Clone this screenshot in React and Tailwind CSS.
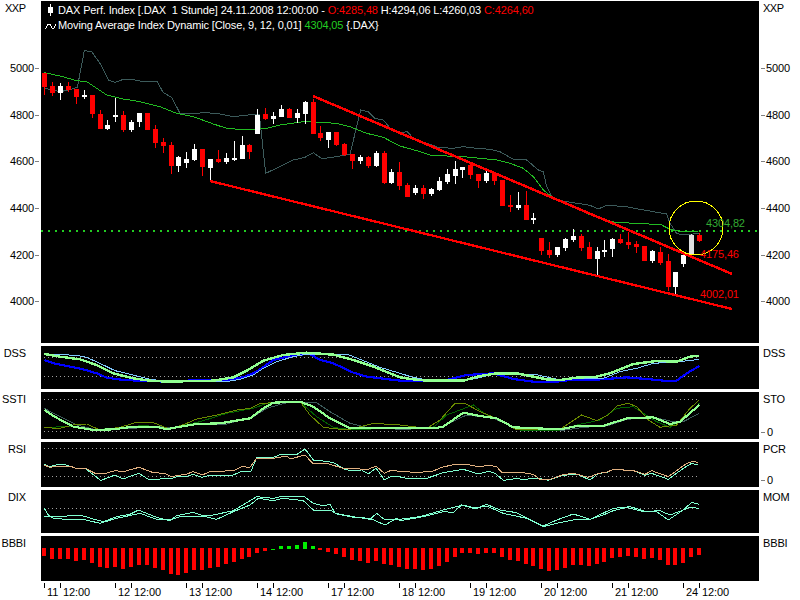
import React from "react";

const z = (x0, y0, pts) => pts.map(([x, y]) => `${x0 + x / 3},${y0 + y / 3}`).join(" ");
const join = (...parts) => parts.join(" ");

// candles: colour, body top, body bottom, wick top, wick bottom (measured at 3x, y from page top)
const candles = [
  ["r",218,262,218,285],["r",258,278,245,288],["w",258,278,250,300],["r",258,270,245,275],["r",267,291,267,312],
  ["w",285,291,270,297],["r",285,341,285,354],["r",341,387,330,387],["w",375,387,360,390],["w",345,348,293,366],
  ["r",345,389,333,395],["w",366,390,360,395],["w",339,366,339,381],["r",339,389,339,389],["r",387,429,375,444],
  ["r",426,438,414,459],["r",435,497,426,522],["w",471,497,468,516],["w",477,488,456,504],["w",447,480,432,483],
  ["r",447,501,447,528],["w",477,504,477,546],["r",477,486,450,489],["w",474,486,459,492],["w",474,480,423,483],
  ["w",435,477,408,477],["r",435,456,433,477],["w",345,403,327,403],["r",342,357,324,360],["w",348,357,336,372],
  ["w",327,351,315,351],["r",327,353,324,353],["w",339,354,327,369],["w",306,342,303,372],["r",306,402,297,402],
  ["r",399,414,378,423],["w",396,420,396,444],["r",396,435,396,438],["r",432,465,429,468],["r",462,483,462,507],
  ["w",471,483,465,492],["r",471,498,468,504],["w",459,498,453,501],["r",459,549,453,552],["w",516,549,507,552],
  ["r",516,558,486,570],["r",555,590,550,592],["w",564,579,555,585],["r",564,582,555,597],["w",567,582,564,588],
  ["w",543,570,531,573],["w",522,546,507,552],["w",507,528,483,552],["w",501,510,501,534],["r",495,525,492,537],
  ["r",522,543,522,564],["w",519,543,513,549],["r",519,543,516,555],["r",540,617,540,617],["r",615,622,585,635],
  ["w",615,625,575,628],["r",615,660,573,660],["w",655,658,640,672],["r",714,753,714,765],["r",750,765,726,774],
  ["w",741,765,741,770],["w",717,744,714,753],["w",708,720,688,726],["r",708,744,702,753],["r",741,777,726,777],
  ["w",753,777,741,825],["w",750,756,720,771],["w",717,747,714,771],["r",717,729,702,732],["r",726,735,696,747],
  ["r",732,741,723,759],["r",738,783,738,783],["w",753,783,750,789],["r",756,789,741,794],["r",783,862,762,873],
  ["w",816,862,816,882],["w",765,792,762,801],["g",705,765,703,765],["r",705,723,699,726],
];

const bars = [258,268,268,268,273,270,279,291,294,291,298,291,285,286,294,300,312,315,309,300,300,294,292,282,276,267,262,250,244,
  -236,-228,-228,-225,-216,-228,240,246,252,262,270,273,279,273,282,284,291,297,298,300,297,288,276,262,250,250,252,250,249,262,270,
  274,282,288,298,303,300,294,285,285,288,282,276,264,262,258,262,268,264,270,285,286,279,261,256];

const dim = join(
  z(0,0,[[133,265],[157,270],[181,275],[205,270],[232,262],[240,220],[253,152],[275,155],[300,190],[325,240],[345,247],[370,238],[395,238],[420,243],[470,243],[490,278],[515,292],[540,340],[580,340],[620,338],[660,342],[700,350],[760,343],[778,343],[797,520],[860,490],[880,480],[915,472],[940,458],[965,476],[1010,470],[1050,463],[1065,400],[1082,330],[1105,335],[1125,355],[1150,360],[1175,390]]),
  z(400,0,[[0,398],[22,395],[40,415],[60,425],[90,433],[115,442],[160,445],[190,440],[230,445],[270,448],[300,455],[340,478],[380,480],[415,510],[430,515],[440,560],[455,590]]),
  z(400,200,[[470,0],[520,8],[570,16],[595,27],[620,16],[680,20],[720,28],[800,42],[810,70],[830,100],[850,105],[900,100]])
);
const ma = join(
  z(0,0,[[133,218],[180,228],[230,242],[260,245],[290,265],[320,285],[370,297],[420,305],[480,320],[530,340],[580,350],[640,372],[680,385],[740,390],[800,385],[840,375],[910,365],[960,367],[1010,370],[1050,380],[1100,400],[1150,412]]),
  z(400,0,[[0,438],[60,455],[90,465],[140,468],[190,470],[240,475],[290,480],[330,490],[370,505],[400,530],[430,570],[465,598]]),
  z(400,200,[[520,20],[565,42],[600,55],[650,68],[720,70],[785,75],[810,88],[850,96],[895,94]])
);

const dssBlue = join(
  z(0,340,[[133,60],[160,70],[200,78],[250,88],[290,100],[320,113],[370,120],[420,122],[500,125],[600,120],[680,120],[730,112],[770,95],[820,60],[880,45],[930,42],[960,60],[1000,70],[1060,98],[1100,110],[1150,116]]),
  z(400,340,[[0,122],[80,122],[140,120],[200,105],[280,100],[340,117],[400,125],[470,125],[510,120],[570,120],[620,117],[680,112],[750,118],[790,122],[830,122],[860,100],[898,78]])
);
const dssLight = join(
  z(0,340,[[133,42],[230,46],[260,52],[310,75],[345,92],[400,105],[450,118],[500,124],[680,125],[720,118],[760,105],[790,85],[830,65],[880,50],[920,42],[1040,42],[1090,62],[1140,82]]),
  z(400,340,[[0,100],[40,112],[90,122],[190,122],[230,115],[280,102],[400,102],[480,120],[530,115],[610,115],[660,95],[710,85],[760,70],[840,65],[898,58]])
);
const dssGreen = join(
  z(0,340,[[133,42],[180,50],[240,58],[290,75],[340,100],[400,115],[450,122],[500,125],[640,122],[700,112],[740,92],[790,62],[850,45],[920,38],[1000,44],[1060,60],[1120,80]]),
  z(400,340,[[0,112],[40,118],[80,122],[190,122],[240,108],[290,100],[350,100],[440,118],[480,120],[530,113],[590,110],[630,100],[700,72],[770,63],[830,65],[870,50],[898,47]])
);

const stDim = join(
  z(0,340,[[133,205],[170,225],[230,255],[290,270],[400,265],[470,258],[520,265],[600,252],[680,252],[760,230],[800,205],[860,188],[950,188],[990,215],[1050,250],[1100,262]]),
  z(400,340,[[0,268],[100,265],[130,258],[200,225],[280,235],[350,265],[480,272],[550,262],[620,258],[680,238],[760,232],[820,245],[850,245],[898,220]])
);
const stThick = join(
  z(0,340,[[133,210],[160,228],[220,260],[280,270],[340,268],[400,260],[470,260],[500,268],[530,262],[590,252],[660,250],[750,235],[790,205],[820,188],[900,185],[940,200],[990,235],[1050,265]]),
  z(400,340,[[0,265],[100,265],[130,260],[190,218],[240,228],[290,235],[340,262],[480,268],[530,258],[610,258],[680,235],[760,232],[810,252],[840,245],[898,195]])
);
const stOlive = join(
  z(0,340,[[133,263],[180,265],[220,255],[260,252],[300,270],[360,262],[410,247],[460,248],[510,268],[560,250],[590,237],[650,225],[710,210],[750,205],[780,190],[900,185],[930,225],[970,262],[1040,270],[1120,250]]),
  z(400,340,[[0,255],[80,265],[120,240],[165,190],[195,190],[240,215],[290,235],[350,270],[480,268],[545,225],[590,242],[625,225],[650,198],[685,190],[710,200],[745,240],[780,262],[830,255],[870,205],[898,180]])
);
const stDark = join(
  z(0,340,[[133,263],[220,258],[280,268],[380,265],[430,255],[500,268],[600,245],[680,220],[760,205],[800,190],[900,186],[950,230],[1000,262],[1060,270]]),
  z(400,340,[[0,262],[100,262],[140,225],[180,210],[220,195],[260,225],[310,245],[360,270],[480,270],[530,255],[600,240],[650,205],[700,200],[730,220],[770,245],[810,262],[860,230],[898,190]])
);

const rsiCyan = join(
  z(40,440,[[12,73],[30,80],[55,73],[75,74],[105,84],[135,85],[155,100],[182,121],[205,113],[225,105],[250,117],[275,107],[297,100],[325,118],[395,116],[415,108],[445,108],[460,103],[487,112],[510,105],[580,105],[600,96],[633,93],[650,53],[700,52],[720,44],[770,44],[795,27],[820,60],[860,64],[880,68],[915,88],[935,92],[965,90],[985,102],[1008,84],[1033,120],[1055,108],[1080,110]]),
  z(400,440,[[0,113],[30,115],[60,114],[80,115],[130,98],[190,88],[235,102],[265,94],[285,100],[310,121],[345,116],[375,118],[410,114],[445,121],[490,106],[530,102],[570,120],[595,100],[620,98],[640,88],[700,92],[735,106],[755,100],[805,118],[850,85],[875,70],[895,75]])
);
const rsiTan = join(
  z(40,440,[[12,75],[30,82],[60,78],[90,78],[105,84],[135,84],[165,100],[190,102],[225,92],[250,95],[297,82],[340,98],[375,100],[395,110],[440,102],[460,95],[487,105],[510,95],[580,92],[605,80],[630,82],[650,55],[700,55],[740,48],[750,57],[795,45],[820,72],[860,70],[910,85],[985,88],[1008,78],[1033,100],[1055,90],[1080,95]]),
  z(400,440,[[0,95],[30,96],[60,97],[100,93],[125,82],[165,73],[200,73],[240,81],[265,75],[290,80],[305,97],[360,97],[400,103],[420,118],[450,118],[490,104],[520,100],[565,112],[595,100],[620,97],[640,88],[700,92],[735,103],[755,92],[805,110],[860,70],[880,64],[895,68]])
);

const dixA = join(
  z(0,470,[[133,115],[145,135],[160,145],[200,148],[250,148],[300,160],[350,145],[420,130],[470,148],[510,150],[540,140],[590,140],[640,135],[700,122],[770,80],[820,85],[850,78],[910,78],[940,100],[970,108],[990,102],[1005,130],[1060,140],[1110,148],[1130,130],[1155,150]]),
  z(400,470,[[0,148],[60,140],[130,120],[190,105],[230,115],[260,103],[300,120],[350,128],[430,170],[470,160],[520,150],[570,148],[640,115],[690,110],[740,125],[770,125],[805,150],[850,120],[875,97],[898,103]])
);
const dixB = join(
  z(0,470,[[133,138],[200,138],[240,135],[290,150],[310,155],[350,140],[390,133],[415,120],[470,142],[510,152],[530,137],[580,127],[610,138],[650,148],[700,125],[750,105],[775,85],[820,92],[850,85],[910,92],[940,120],[990,120],[1010,132],[1060,142],[1110,145],[1155,165],[1190,145]]),
  z(400,470,[[0,152],[70,140],[130,125],[160,127],[185,105],[220,115],[260,108],[310,130],[380,145],[430,168],[470,150],[520,132],[570,148],[610,135],[640,122],[680,112],[730,125],[780,122],[810,135],[850,120],[870,112],[898,115]])
);

const X = (i) => Math.round(44.3 + 7.89 * i);
const Line = ({ p, c, w = 1 }) => <polyline points={p} fill="none" stroke={c} strokeWidth={w} />;
const Dots = ({ y }) => <line x1="44" x2="697" y1={y} y2={y} stroke="#a0a0a0" strokeWidth="1" strokeDasharray="1 3" />;

const Chart = ({ top, h, children }) => (
  <svg className="block w-[718px]" style={{ height: h }} viewBox={`41 ${top} 718 ${h}`} shapeRendering="crispEdges">
    {children}
  </svg>
);

const Tick = ({ side, label }) => (
  <div className={side === "l" ? "flex items-center justify-end gap-[1px] pr-[2px] h-[46.7px]" : "flex items-center gap-[1px] pl-[2px] h-[46.7px]"}>
    {side === "l" && <span>{label}</span>}
    <span className="w-[4px] h-px bg-[#808080]" />
    {side === "r" && <span>{label}</span>}
  </div>
);

const levels = ["5000", "4800", "4600", "4400", "4200", "4000"];

const SubRow = ({ left, right, zero, h, top, children }) => (
  <div className="flex mt-[3px]" style={{ height: h }}>
    <div className="w-[41px] shrink-0 text-right pr-[15px] whitespace-nowrap">{left}</div>
    <div className="w-[718px] bg-black overflow-hidden">
      <Chart top={top} h={h}>{children}</Chart>
    </div>
    <div className="w-[41px] shrink-0 flex flex-col justify-between">
      <div className="pl-[4px] whitespace-nowrap">{right}</div>
      {zero && (
        <div className="flex items-center gap-[1px] pl-[2px] mb-[-1px]">
          <span className="w-[4px] h-px bg-[#808080]" />
          <span className="ml-[1px]">0</span>
        </div>
      )}
    </div>
  </div>
);

const days = ["11", "12", "13", "14", "17", "18", "19", "20", "21", "24"];

export default function App() {
  return (
    <div className="w-[800px] h-[600px] bg-white text-black overflow-hidden pt-px text-[11px] leading-[15px] tracking-[-0.13px] [font-family:'Liberation_Sans',Arial,sans-serif]">
      <div className="flex h-[342px]">
        <div className="w-[41px] shrink-0 flex flex-col">
          <div className="h-[44px] pl-[5px] tracking-[-0.5px]">XXP</div>
          {levels.map((l) => <Tick key={l} side="l" label={l} />)}
        </div>
        <div className="relative w-[718px] bg-black overflow-hidden">
          <Chart top={1} h={342}>
            <Line p={dim} c="#3c5a5a" />
            <Line p={ma} c="#22bb22" />
            <line x1="41" x2="759" y1="231" y2="231" stroke="#22cc22" strokeWidth="2" strokeDasharray="2 5" />
            {candles.map(([c, bt, bb, wt, wb], i) => {
              const col = c === "r" ? "#ff0000" : c === "g" ? "#e0e0e0" : "#ffffff";
              const x = X(i);
              const top = Math.round(bt / 3);
              return (
                <g key={i}>
                  <rect x={x} y={Math.round(wt / 3)} width="1" height={Math.max(1, Math.round((wb - wt) / 3))} fill={col} />
                  <rect x={x - 2} y={top} width="5" height={Math.max(2, Math.round(bb / 3) - top)} fill={col} />
                </g>
              );
            })}
            <line x1="313" y1="96" x2="732" y2="274" stroke="#ff0000" strokeWidth="2.5" />
            <line x1="210" y1="181" x2="732" y2="309" stroke="#ff0000" strokeWidth="2.3" />
            <circle cx="696" cy="228" r="27" fill="none" stroke="#ffff00" strokeWidth="1" />
          </Chart>
          <div className="absolute top-[2px] left-[4px] text-white whitespace-pre">
            <div className="flex items-center">
              <svg width="13" height="15" viewBox="0 0 13 15" className="shrink-0" shapeRendering="crispEdges">
                <rect x="5" y="1" width="1" height="12" fill="#fff" />
                <rect x="3" y="4" width="5" height="6" fill="#fff" />
              </svg>
              <span>DAX Perf. Index [.DAX  1 Stunde] 24.11.2008 12:00:00 - <span className="text-[#ff0000]">O:4285,48</span> H:4294,06 L:4260,03 <span className="text-[#ff0000]">C:4264,60</span></span>
            </div>
            <div className="flex items-center">
              <svg width="13" height="15" viewBox="0 0 13 15" className="shrink-0" shapeRendering="crispEdges">
                <polyline points="0.5,11 3,6 5,6 7,10 9,10 11,6" fill="none" stroke="#fff" strokeWidth="1" />
              </svg>
              <span>Moving Average Index Dynamic [Close, 9, 12, 0,01] <span className="text-[#22cc22]">4304,05</span> {"{.DAX}"}</span>
            </div>
          </div>
          <span className="absolute left-[665px] top-[215px] text-[#33aa33]">4304,82</span>
          <span className="absolute left-[659px] top-[246px] text-[#ff0000]">4175,46</span>
          <span className="absolute left-[659px] top-[286px] text-[#ff0000]">4002,01</span>
        </div>
        <div className="w-[41px] shrink-0 flex flex-col">
          <div className="h-[44px] pl-[4px] tracking-[-0.5px]">XXP</div>
          {levels.map((l) => <Tick key={l} side="r" label={l} />)}
        </div>
      </div>

      <SubRow left="DSS" right="DSS" h={43} top={346}>
        <Dots y={357} /><Dots y={376} />
        <Line p={dssBlue} c="#0000ff" w={2.2} />
        <Line p={dssLight} c="#80c8ff" />
        <Line p={dssGreen} c="#90ff90" w={2.4} />
      </SubRow>
      <SubRow left="SSTI" right="STO" zero h={47} top={392}>
        <Dots y={399} /><Dots y={431} />
        <Line p={stDim} c="#3c5a5a" />
        <Line p={stDark} c="#006400" />
        <Line p={stOlive} c="#6a8a00" />
        <Line p={stThick} c="#90ff90" w={2.2} />
      </SubRow>
      <SubRow left="RSI" right="PCR" zero h={45} top={442}>
        <Dots y={448} /><Dots y={476} />
        <Line p={rsiCyan} c="#80ffd0" />
        <Line p={rsiTan} c="#e0b080" />
      </SubRow>
      <SubRow left="DIX" right="MOM" h={43} top={490}>
        <Dots y={508} />
        <Line p={dixA} c="#80ffd0" />
        <Line p={dixB} c="#80ffd0" />
      </SubRow>
      <SubRow left="BBBI" right="BBBI" h={45} top={536}>
        {bars.map((b, i) => {
          const neg = b < 0;
          const y0 = neg ? Math.round(470 + -b / 3) : 548;
          const y1 = neg ? 549 : Math.round(470 + b / 3);
          return <rect key={i} x={X(i) - 2} y={y0} width="4" height={Math.max(1, y1 - y0)} fill={neg ? "#00ee00" : "#ff0000"} />;
        })}
      </SubRow>

      <div className="flex pl-[44px] h-[19px]">
        {days.map((d) => (
          <div key={d} className="w-[71px] shrink-0 flex">
            <div className="w-[16px] flex">
              <span className="w-px h-[5px] mt-[2px] bg-black" />
              <span className="ml-[2px] mt-[4px]">{d}</span>
            </div>
            <div className="flex">
              <span className="w-px h-[5px] mt-[2px] bg-black" />
              <span className="ml-[2px] mt-[4px]">12:00</span>
            </div>
          </div>
        ))}
      </div>
    </div>
  );
}
